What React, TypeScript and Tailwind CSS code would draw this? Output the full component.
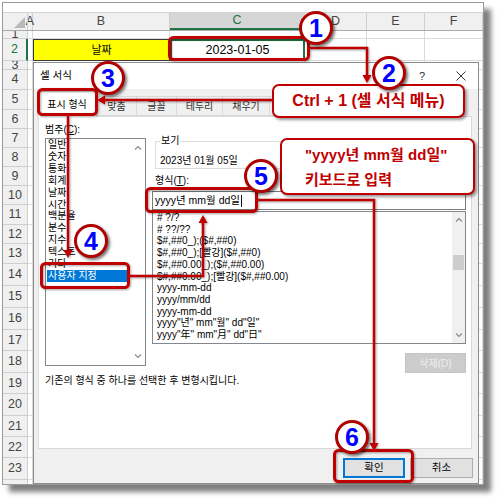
import React from "react";

const COLS = [
  { name: "A", w: "w-[5px]" },
  { name: "B", w: "w-[137px]" },
  { name: "C", w: "w-[135px]" },
  { name: "D", w: "w-[62px]" },
  { name: "E", w: "w-[58px]" },
  { name: "F", w: "w-[58px]" },
];

const ROWS = [
  { n: 1, h: "h-[8px]" },
  { n: 2, h: "h-[22px]" },
  { n: 3, h: "h-[9px]" },
  { n: 4, h: "h-[20px]" },
  { n: 5, h: "h-[20px]" },
  { n: 6, h: "h-[19px]" },
  { n: 7, h: "h-[19px]" },
  { n: 8, h: "h-[19px]" },
  { n: 9, h: "h-[19px]" },
  { n: 10, h: "h-[19px]" },
  { n: 11, h: "h-[20px]" },
  { n: 12, h: "h-[19px]" },
  { n: 13, h: "h-[20px]" },
  { n: 14, h: "h-[22px]" },
  { n: 15, h: "h-[22px]" },
  { n: 16, h: "h-[22px]" },
  { n: 17, h: "h-[21px]" },
  { n: 18, h: "h-[22px]" },
  { n: 19, h: "h-[21px]" },
  { n: 20, h: "h-[22px]" },
  { n: 21, h: "h-[21px]" },
  { n: 22, h: "h-[21px]" },
  { n: 23, h: "h-[22px]" },
  { n: 24, h: "h-[22px]" },
];

const CATS = ["일반", "숫자", "통화", "회계", "날짜", "시간", "백분율", "분수", "지수", "텍스트", "기타", "사용자 지정"];

const FORMATS = [
  "# ?/?",
  "# ??/??",
  "$#,##0_);($#,##0)",
  "$#,##0_);[빨강]($#,##0)",
  "$#,##0.00_);($#,##0.00)",
  "$#,##0.00_);[빨강]($#,##0.00)",
  "yyyy-mm-dd",
  "yyyy/mm/dd",
  "yyyy-mm-dd",
  'yyyy"년" mm"월" dd"일"',
  'yyyy"年" mm"月" dd"日"',
];

const TABS = [
  { label: "맞춤", w: "w-[40px]" },
  { label: "글꼴", w: "w-[40px]" },
  { label: "테두리", w: "w-[46px]" },
  { label: "채우기", w: "w-[47px]" },
  { label: "보호", w: "w-[40px]" },
];

function Chevron({ up }: { up?: boolean }) {
  return (
    <svg width="8" height="5" viewBox="0 0 8 5" className="shrink-0">
      <path d={up ? "M1 4.5 L4 1.5 L7 4.5" : "M1 0.5 L4 3.5 L7 0.5"} fill="none" stroke="#8a8a8a" strokeWidth="1.2" />
    </svg>
  );
}

function Sheet() {
  return (
    <div className="w-[482px] h-[483px] border border-[#9a9a9a] bg-white overflow-hidden shadow-[7px_7px_5px_rgba(0,0,0,0.5)]">
      <div className="h-[10px] border-b border-[#d4d4d4] bg-white" />
      <div className="flex h-[18px] bg-[#f0f0f0] border-b border-[#ababab] text-[12.5px] text-[#444]">
        <div className="relative w-[25px] shrink-0 border-r border-[#cfcfcf]">
          <svg width="11" height="11" viewBox="0 0 11 11" className="absolute right-[2px] bottom-[2px]">
            <polygon points="11,0 11,11 0,11" fill="#b9b9b9" />
          </svg>
        </div>
        {COLS.map((c) => (
          <div
            key={c.name}
            className={`${c.w} shrink-0 flex items-center justify-center border-r border-[#cfcfcf] ${
              c.name === "C" ? "bg-[#d6d6d6] text-[#217346] border-b-2 border-b-[#217346]" : ""
            }`}
          >
            {c.name}
          </div>
        ))}
      </div>
      {ROWS.map((r) => (
        <div key={r.n} className={`flex ${r.h} overflow-hidden`}>
          <div
            className={`w-[25px] shrink-0 flex items-center justify-center bg-[#f0f0f0] border-r border-b border-[#cfcfcf] text-[12.5px] ${
              r.n === 2 ? "bg-[#d6d6d6] text-[#217346] border-r-2 border-r-[#217346]" : "text-[#444]"
            }`}
          >
            {r.n}
          </div>
          {COLS.map((c) => {
            if (r.n === 2 && c.name === "B") {
              return (
                <div key={c.name} className={`${c.w} shrink-0 flex items-center justify-center bg-[#ffff00] shadow-[inset_0_0_0_1px_#3a3a3a] text-[11px]`}>
                  날짜
                </div>
              );
            }
            if (r.n === 2 && c.name === "C") {
              return (
                <div key={c.name} className={`${c.w} shrink-0 flex items-center justify-center shadow-[inset_0_0_0_2px_#217346] text-[12.5px]`}>
                  2023-01-05
                </div>
              );
            }
            return <div key={c.name} className={`${c.w} shrink-0 border-r border-b border-[#dadada]`} />;
          })}
        </div>
      ))}
    </div>
  );
}

function FormatDialog() {
  return (
    <div className="absolute left-[33px] top-[62px] w-[446px] h-[422px] border border-[#8c8c8c] bg-[#f0f0f0] flex flex-col">
      <div className="h-[26px] shrink-0 bg-white flex items-center pl-[6px] pr-[12px] text-[10.5px]">
        <span>셀 서식</span>
        <span className="ml-auto mr-[31px] text-[11px] text-[#333]">?</span>
        <svg width="10" height="10" viewBox="0 0 10 10">
          <path d="M0.5 0.5 L9.5 9.5 M9.5 0.5 L0.5 9.5" stroke="#333" strokeWidth="1" />
        </svg>
      </div>
      <div className="h-[27px] shrink-0 flex items-end pl-[3px] relative text-[10px]">
        <div className="w-[60px] h-[26px] -mb-px bg-white border border-[#d9d9d9] border-b-0 flex items-center justify-center">
          표시 형식
        </div>
        {TABS.map((t) => (
          <div key={t.label} className={`${t.w} h-[20px] border border-l-0 border-[#d9d9d9] bg-[#f0f0f0] flex items-center justify-center text-[#333]`}>
            {t.label}
          </div>
        ))}
      </div>
      <div className="ml-[4px] w-[434px] h-[333px] shrink-0 bg-white border border-[#d9d9d9] pl-[6px] pt-[5px] pr-[5px] text-[10px]">
        <div className="flex gap-[6px]">
          <div className="w-[101px] shrink-0 flex flex-col">
            <div className="h-[16px] leading-[16px]">
              범주(<span className="underline">C</span>):
            </div>
            <div className="h-[228px] border border-[#828790] flex">
              <div className="flex-1 leading-[11.9px]">
                {CATS.map((c) => (
                  <div
                    key={c}
                    className={`w-[81px] ml-px pl-px whitespace-nowrap ${c === "사용자 지정" ? "bg-[#0078d7] text-white" : ""}`}
                  >
                    {c}
                  </div>
                ))}
              </div>
              <div className="w-[14px] flex flex-col items-center justify-between pt-[6px] pb-[6px]">
                <Chevron up />
                <Chevron />
              </div>
            </div>
          </div>
          <div className="flex-1 flex flex-col">
            <fieldset className="mt-[12px] ml-[3px] h-[35px] border border-[#dcdcdc] pl-[4px]">
              <legend className="px-px leading-[14px]">보기</legend>
              <div className="mt-[6px] leading-[14px]">2023년 01월 05일</div>
            </fieldset>
            <div className="mt-[5px] h-[14px] leading-[14px] ml-[3px]">
              형식(<span className="underline">T</span>):
            </div>
            <div className="mt-[3px] h-[19px] border border-[#7a7a7a] flex items-center pl-[2px] text-[10.5px]">
              yyyy년 mm월 dd일
              <span className="w-px h-[12px] bg-black ml-px" />
            </div>
            <div className="mt-px h-[133px] border border-[#828790] flex">
              <div className="flex-1 pl-[4px] leading-[11.7px] whitespace-nowrap overflow-hidden">
                {FORMATS.map((f, i) => (
                  <div key={i}>{f}</div>
                ))}
              </div>
              <div className="w-[13px] bg-[#f0f0f0] flex flex-col items-center pt-[5px] pb-[5px]">
                <Chevron up />
                <div className="mt-[33px] w-[11px] h-[15px] bg-[#cdcdcd]" />
                <div className="mt-auto">
                  <Chevron />
                </div>
              </div>
            </div>
            <div className="mt-[9px] self-end w-[61px] h-[20px] bg-[#cccccc] border border-[#c4c4c4] flex items-center justify-center text-[#efefef]">
              삭제(D)
            </div>
          </div>
        </div>
        <div className="mt-px leading-[14px]">기존의 형식 중 하나를 선택한 후 변형시킵니다.</div>
      </div>
      <div className="flex justify-end gap-[5px] pr-[5px] pt-[9px] text-[10.5px]">
        <div className="w-[62px] h-[20px] bg-[#e1e1e1] border-2 border-[#0078d7] flex items-center justify-center">확인</div>
        <div className="w-[63px] h-[20px] bg-[#e1e1e1] border border-[#adadad] flex items-center justify-center">취소</div>
      </div>
    </div>
  );
}

function Badge({ n, pos }: { n: number; pos: string }) {
  return (
    <div
      className={`absolute ${pos} w-[34px] h-[34px] rounded-full border-[3px] border-[#b00000] bg-white shadow-[2px_2px_3px_rgba(0,0,0,0.55)] flex items-center justify-center text-[25px] font-bold leading-none text-[#0000ff]`}
    >
      {n}
    </div>
  );
}

function Annotations() {
  const red = "#c00000";
  return (
    <>
      <svg width="500" height="500" viewBox="0 0 500 500" className="absolute left-0 top-0 pointer-events-none drop-shadow-[1px_1px_1px_rgba(0,0,0,0.35)]">
        <g fill="none" stroke={red} strokeWidth="3">
          <rect x="169.5" y="37.5" width="139" height="22" rx="4" />
          <rect x="38.5" y="89.5" width="58" height="25" rx="4" />
          <rect x="41.5" y="263.5" width="87" height="24" rx="4" />
          <rect x="146.5" y="188.5" width="110" height="23" rx="4" />
          <rect x="334.5" y="450.5" width="78" height="31" rx="4" />
        </g>
        <g fill="none" stroke={red} strokeWidth="2.5">
          <path d="M310 48 H367 V76" />
          <path d="M272 100 H104" />
          <path d="M68 116 V251" />
          <path d="M130 276 H203 V222" />
          <path d="M258 200 H374 V444" />
        </g>
        <g fill={red}>
          <polygon points="362.5,75 371.5,75 367,83" />
          <polygon points="105,95.5 105,104.5 97,100" />
          <polygon points="63.5,250 72.5,250 68,258" />
          <polygon points="198.5,223 207.5,223 203,215" />
          <polygon points="369.5,443 378.5,443 374,451" />
        </g>
      </svg>
      <div className="absolute left-[272px] top-[84px] w-[193px] h-[34px] rounded-[7px] border-2 border-[#c00000] bg-white shadow-[2px_2px_3px_rgba(0,0,0,0.4)] flex items-center justify-center text-[16px] font-bold text-[#c00000] whitespace-nowrap">
        Ctrl + 1 (셀 서식 메뉴)
      </div>
      <div className="absolute left-[280px] top-[138px] w-[195px] h-[57px] rounded-[7px] border-2 border-[#c00000] bg-white shadow-[2px_2px_3px_rgba(0,0,0,0.4)] flex flex-col justify-center pl-[23px] text-[15px] leading-[25px] font-bold text-[#c00000] whitespace-nowrap">
        <div>"yyyy년 mm월 dd일"</div>
        <div>키보드로 입력</div>
      </div>
      <Badge n={1} pos="left-[299px] top-[11px]" />
      <Badge n={2} pos="left-[372px] top-[56px]" />
      <Badge n={3} pos="left-[91px] top-[61px]" />
      <Badge n={4} pos="left-[74px] top-[224px]" />
      <Badge n={5} pos="left-[244px] top-[159px]" />
      <Badge n={6} pos="left-[335px] top-[420px]" />
    </>
  );
}

export default function App() {
  return (
    <div className="relative w-[500px] h-[500px] bg-white overflow-hidden pl-[2px] pt-[2px] font-['Liberation_Sans','Noto_Sans_CJK_KR',sans-serif] text-black">
      <Sheet />
      <FormatDialog />
      <Annotations />
    </div>
  );
}
